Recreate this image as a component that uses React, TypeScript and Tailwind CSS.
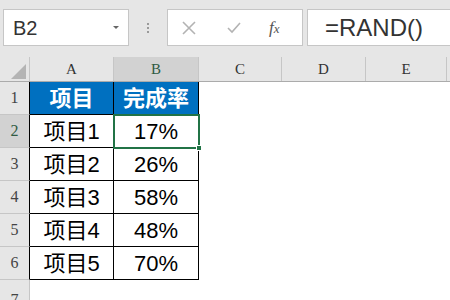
const cols = [
  { label: 'A', w: 'w-[84px]' },
  { label: 'B', w: 'w-[85px]' },
  { label: 'C', w: 'w-[83px]' },
  { label: 'D', w: 'w-[84px]' },
  { label: 'E', w: 'w-[81px]' },
]

const rows = [
  ['项目1', '17%'],
  ['项目2', '26%'],
  ['项目3', '58%'],
  ['项目4', '48%'],
  ['项目5', '70%'],
]

const sans = { fontFamily: '"Liberation Sans", "Noto Sans CJK SC", sans-serif' }
const serif = { fontFamily: '"Liberation Serif", "Noto Sans CJK SC", serif' }

function FormulaBar() {
  return (
    <div className="h-[57px] bg-[#e6e6e6] flex items-start pt-[9px] pl-[3px]">
      {/* name box */}
      <div className="w-[126px] h-[37px] bg-white border border-[#c6c6c6] flex items-center pl-[9px] pr-[9px]">
        <span className="flex-1 text-[20px] text-[#333]" style={sans}>B2</span>
        <span className="w-0 h-0 border-l-[3px] border-r-[3px] border-t-[3px] border-l-transparent border-r-transparent border-t-[#666]" />
      </div>
      {/* grip */}
      <div className="w-[38px] h-[37px] flex flex-col items-center justify-center gap-[2px]">
        <span className="w-[2px] h-[2px] bg-[#9a9a9a]" />
        <span className="w-[2px] h-[2px] bg-[#9a9a9a]" />
        <span className="w-[2px] h-[2px] bg-[#9a9a9a]" />
      </div>
      {/* cancel / enter / fx */}
      <div className="w-[136px] h-[37px] bg-white border border-[#c6c6c6] flex items-center">
        <svg width="16" height="16" viewBox="0 0 16 16" className="ml-[13px]">
          <path d="M2 2 L14 14 M14 2 L2 14" stroke="#b3b3b3" strokeWidth="1.6" fill="none" />
        </svg>
        <svg width="16" height="14" viewBox="0 0 16 14" className="ml-[29px]">
          <path d="M2 7 L6 11 L14 2" stroke="#b3b3b3" strokeWidth="1.6" fill="none" />
        </svg>
        <span className="ml-[27px] text-[17px] italic text-[#555]" style={serif}>
          f<span className="text-[13px]">x</span>
        </span>
      </div>
      {/* formula */}
      <div className="flex-1 ml-[4px] h-[37px] bg-white border border-[#c6c6c6] border-r-0 flex items-center pl-[17px]">
        <span className="text-[24px] text-[#333]" style={sans}>=RAND()</span>
      </div>
    </div>
  )
}

export default function App() {
  return (
    <div className="w-[450px] h-[300px] bg-white overflow-hidden relative">
      <FormulaBar />

      {/* column headers */}
      <div className="flex h-[25px] bg-[#e6e6e6] border-b border-[#ababab]">
        <div className="w-[30px] border-r border-[#c6c6c6] relative">
          <span
            className="absolute right-[3px] bottom-[2px] w-0 h-0"
            style={{ borderBottom: '15px solid #b4b4b4', borderLeft: '15px solid transparent' }}
          />
        </div>
        {cols.map((c) => (
          <div
            key={c.label}
            className={`${c.w} flex items-center justify-center border-r border-[#c6c6c6] text-[15px] ${
              c.label === 'B' ? 'bg-[#d2d2d2] text-[#2f5a43]' : 'text-[#333]'
            }`}
            style={serif}
          >
            {c.label}
          </div>
        ))}
      </div>

      {/* row 1 */}
      <div className="flex h-[33px]">
        <div className="w-[30px] bg-[#e6e6e6] border-r border-black border-b border-b-[#c6c6c6] flex items-center justify-center text-[16px] text-[#444]" style={serif}>1</div>
        <div className="w-[84px] bg-[#0070c0] border-r border-b border-black flex items-center justify-center text-white font-bold text-[22px]" style={sans}>项目</div>
        <div className="w-[85px] bg-[#0070c0] border-r border-b border-black flex items-center justify-center text-white font-bold text-[22px]" style={sans}>完成率</div>
      </div>

      {rows.map(([a, b], i) => (
        <div key={a} className="flex h-[33px]">
          <div
            className={`w-[30px] border-r border-black border-b border-b-[#c6c6c6] flex items-center justify-center text-[16px] ${
              i === 0 ? 'bg-[#d2d2d2] text-[#2f5a43]' : 'bg-[#e6e6e6] text-[#444]'
            }`}
            style={serif}
          >
            {i + 2}
          </div>
          <div className="w-[84px] border-r border-b border-black flex items-center justify-center text-[22px] text-black" style={sans}>{a}</div>
          <div className="w-[85px] border-r border-b border-black flex items-center justify-center text-[22px] text-black" style={sans}>{b}</div>
        </div>
      ))}

      {/* row 7 */}
      <div className="flex h-[33px]">
        <div className="w-[30px] bg-[#e6e6e6] border-r border-[#c6c6c6] flex items-start justify-center pt-[8px] text-[16px] text-[#444]" style={serif}>7</div>
      </div>

      {/* selection on B2 */}
      <div className="absolute left-[113px] top-[114px] w-[87px] h-[35px] border-2 border-[#217346] pointer-events-none" />
      <div className="absolute left-[196px] top-[145px] w-[6px] h-[6px] bg-[#217346] border border-white pointer-events-none" />
    </div>
  )
}
